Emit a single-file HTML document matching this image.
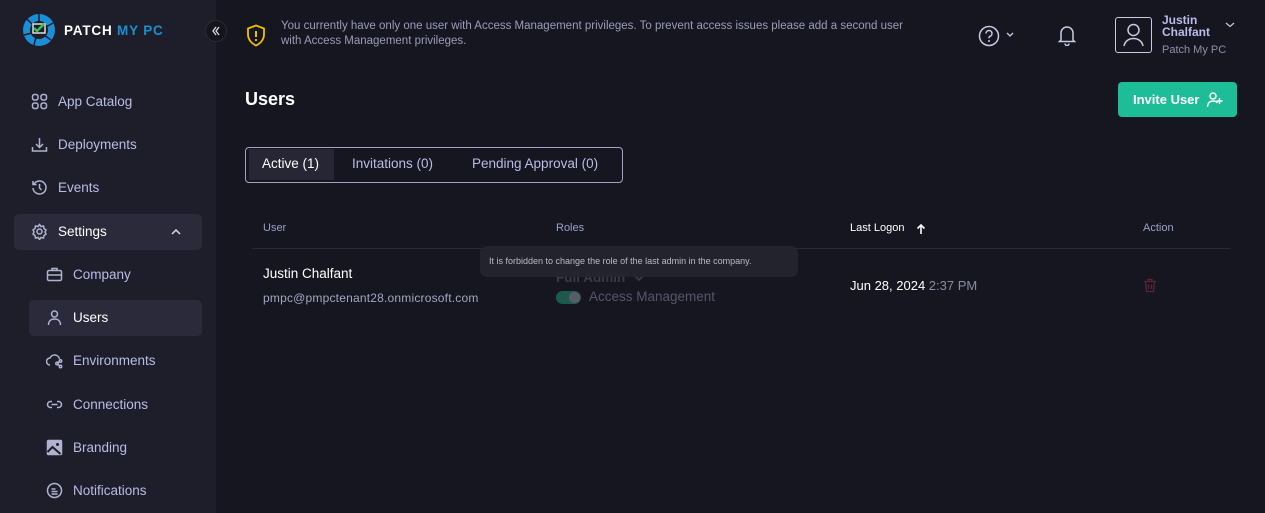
<!DOCTYPE html>
<html><head><meta charset="utf-8"><style>
*{box-sizing:border-box;margin:0;padding:0}
body{width:1265px;height:513px;overflow:hidden;background:#161620;font-family:"Liberation Sans",sans-serif;color:#c9cbe6;position:relative}
.side{position:absolute;left:0;top:0;width:216px;height:513px;background:#1e1e2b}
.abs{position:absolute}
.nav{position:absolute;display:flex;align-items:center;font-size:13.5px;color:#b9bde6}
.nav svg{width:17px;height:17px;margin-right:10px;stroke:#b0b3cf;fill:none;stroke-width:1.5}
.sel{background:#2a2a3a;border-radius:5px}
.th{position:absolute;top:222px;font-size:11px;color:#9aa0c8}
</style></head><body>
<div class="side">
  <svg class="abs" style="left:22px;top:13px" width="34" height="34" viewBox="0 0 34 34"><circle cx="17" cy="17" r="16" fill="#1a8fd6"/><path d="M17 1v8M31 10l-7 4M29 27l-7-5M12 32l2-8M2 22l8-2M5 6l6 6" stroke="#1e1e2b" stroke-width="1.5"/><circle cx="17" cy="17" r="9" fill="#1e1e2b"/><rect x="11" y="11" width="12" height="9" fill="none" stroke="#ddd" stroke-width="1.5"/><path d="M12 15l3 3 7-7" stroke="#3cc14a" stroke-width="2.4" fill="none"/></svg>
  <div class="abs" style="left:64px;top:23px;font-size:13.5px;font-weight:bold;color:#fff;letter-spacing:.8px">PATCH <span style="color:#1a8fd6">MY PC</span></div>
  <div class="nav" style="left:31px;top:93px"><svg viewBox="0 0 17 17"><rect x="1.5" y="1.5" width="5.5" height="5.5" rx="2"/><rect x="10" y="1.5" width="5.5" height="5.5" rx="2"/><rect x="1.5" y="10" width="5.5" height="5.5" rx="2"/><rect x="10" y="10" width="5.5" height="5.5" rx="2"/></svg>App Catalog</div>
  <div class="nav" style="left:31px;top:136px"><svg viewBox="0 0 17 17"><path d="M8.5 2v9M5 8l3.5 3.5L12 8M1.5 11v4h14v-4"/></svg>Deployments</div>
  <div class="nav" style="left:31px;top:179px"><svg viewBox="0 0 17 17"><path d="M3 5a6.5 6.5 0 1 1-1 4M2 2v3.5h3.5M8.5 5v4l2 2"/></svg>Events</div>
  <div class="sel abs" style="left:14px;top:214px;width:188px;height:36px"></div>
  <div class="nav" style="left:31px;top:223px;color:#fff"><svg viewBox="0 0 17 17"><circle cx="8.5" cy="8.5" r="2.5"/><path d="M8.5 1.5l1.5 2 2.5-.5.5 2.5 2 1.5-1 2 1 2-2 1.5-.5 2.5-2.5-.5-1.5 2-1.5-2-2.5.5-.5-2.5-2-1.5 1-2-1-2 2-1.5.5-2.5 2.5.5z"/></svg>Settings</div>
  <svg class="abs" style="left:170px;top:227px" width="12" height="10" viewBox="0 0 12 10"><path d="M2 7l4-4 4 4" stroke="#ddd" stroke-width="1.5" fill="none"/></svg>
  <div class="nav" style="left:46px;top:266px"><svg viewBox="0 0 17 17"><rect x="1.5" y="4.5" width="14" height="10" rx="1.5"/><path d="M6 4.5V2.5h5v2M1.5 9h14"/></svg>Company</div>
  <div class="sel abs" style="left:29px;top:300px;width:173px;height:36px"></div>
  <div class="nav" style="left:46px;top:309px;color:#fff"><svg viewBox="0 0 17 17"><circle cx="8.5" cy="5" r="3"/><path d="M2.5 16c0-4 2.5-6 6-6s6 2 6 6"/></svg>Users</div>
  <div class="nav" style="left:46px;top:352px"><svg viewBox="0 0 17 17"><path d="M4 13a3.5 3.5 0 0 1 0-7 5 5 0 0 1 9.5 1M11 11l3-2M11 12l3 2"/><circle cx="11" cy="11.5" r="1.2"/><circle cx="14.5" cy="9" r="1.2"/><circle cx="14.5" cy="14.5" r="1.2"/></svg>Environments</div>
  <div class="nav" style="left:46px;top:396px"><svg viewBox="0 0 17 17"><path d="M6 5.5H4.5a3 3 0 0 0 0 6H6M11 5.5h1.5a3 3 0 0 1 0 6H11M5.5 8.5h6"/></svg>Connections</div>
  <div class="nav" style="left:46px;top:439px"><svg viewBox="0 0 17 17"><rect x="1.5" y="1.5" width="14" height="14" rx="1" fill="#b0b3cf"/><path d="M1.5 13l5-5 8 7" stroke="#1e1e2b" stroke-width="2"/><circle cx="11.5" cy="5.5" r="1.5" fill="#1e1e2b" stroke="none"/></svg>Branding</div>
  <div class="nav" style="left:46px;top:482px"><svg viewBox="0 0 17 17"><circle cx="8.5" cy="8.5" r="7"/><path d="M5.5 7h4M5.5 9.5h6M5.5 12h6"/></svg>Notifications</div>
</div>
<div class="abs" style="left:205px;top:20px;width:22px;height:22px;border-radius:50%;background:#15151d;border:1px solid #2a2a38"></div>
<svg class="abs" style="left:209px;top:24px" width="14" height="14" viewBox="0 0 14 14"><path d="M7 3L4 7l3 4M10 3L7 7l3 4" stroke="#ddd" stroke-width="1.3" fill="none"/></svg>

<svg class="abs" style="left:246px;top:24px" width="20" height="23" viewBox="0 0 20 23"><path d="M10 1.5l8 3v6c0 5-3.5 9-8 11-4.5-2-8-6-8-11v-6z" stroke="#f0c000" stroke-width="1.8" fill="none"/><path d="M10 7v6" stroke="#f0c000" stroke-width="2"/><circle cx="10" cy="16" r="1.1" fill="#f0c000"/></svg>
<div class="abs" style="left:281px;top:19px;width:640px;font-size:11.5px;line-height:15px;color:#9a9cb8">You currently have only one user with Access Management privileges. To prevent access issues please add a second user with Access Management privileges.</div>

<svg class="abs" style="left:978px;top:25px" width="22" height="22" viewBox="0 0 22 22"><circle cx="11" cy="11" r="9.5" stroke="#c8cae0" stroke-width="1.5" fill="none"/><path d="M8 8.5a3 3 0 1 1 4 2.8c-.8.4-1 1-1 2" stroke="#c8cae0" stroke-width="1.5" fill="none"/><circle cx="11" cy="16" r="1" fill="#c8cae0"/></svg>
<svg class="abs" style="left:1005px;top:31px" width="10" height="8"><path d="M2 2l3 3 3-3" stroke="#c8cae0" stroke-width="1.3" fill="none"/></svg>
<svg class="abs" style="left:1057px;top:24px" width="20" height="22" viewBox="0 0 20 22"><path d="M4 16V9a6 6 0 0 1 12 0v7l1.5 1.5h-15zM8 19.5a2 2 0 0 0 4 0" stroke="#c8cae0" stroke-width="1.5" fill="none"/></svg>
<div class="abs" style="left:1115px;top:17px;width:37px;height:36px;border:1.5px solid #c8cae0;border-radius:3px"></div>
<svg class="abs" style="left:1119px;top:20px" width="29" height="30" viewBox="0 0 29 30"><circle cx="14.5" cy="10" r="5.5" stroke="#c8cae0" stroke-width="1.5" fill="none"/><path d="M5 26c1-5 5-7.5 9.5-7.5S23 21 24 26" stroke="#c8cae0" stroke-width="1.5" fill="none"/></svg>
<div class="abs" style="left:1162px;top:14px;font-size:12px;font-weight:bold;line-height:12px;color:#b8bce8">Justin<br>Chalfant</div>
<svg class="abs" style="left:1225px;top:21px" width="10" height="8"><path d="M1 2l4 3.5L9 2" stroke="#c8cae0" stroke-width="1.2" fill="none"/></svg>
<div class="abs" style="left:1162px;top:44px;font-size:11px;color:#8d8fa8">Patch My PC</div>

<div class="abs" style="left:245px;top:89px;font-size:18px;font-weight:bold;color:#fff">Users</div>
<div class="abs" style="left:1118px;top:82px;width:119px;height:35px;background:#1dbd97;border-radius:4px;color:#fff;font-size:13px;font-weight:bold;display:flex;align-items:center;padding-left:15px">Invite User
<svg style="margin-left:7px" width="17" height="17" viewBox="0 0 17 17"><circle cx="7" cy="5" r="3" stroke="#fff" stroke-width="1.5" fill="none"/><path d="M1.5 16c0-4 2.5-6 5.5-6s4 1 4.5 2M13.5 7v6M10.5 10h6" stroke="#fff" stroke-width="1.5" fill="none"/></svg></div>

<div class="abs" style="left:245px;top:147px;width:378px;height:36px;border:1px solid #a0a3c3;border-radius:4px"></div>
<div class="abs" style="left:249px;top:149px;width:85px;height:31px;background:#262634"></div>
<div class="abs" style="left:262px;top:156px;font-size:13.5px;color:#fff">Active (1)</div>
<div class="abs" style="left:352px;top:156px;font-size:13.5px;color:#b9bde6">Invitations (0)</div>
<div class="abs" style="left:472px;top:156px;font-size:13.5px;color:#b9bde6">Pending Approval (0)</div>

<div class="th" style="left:263px">User</div>
<div class="th" style="left:556px">Roles</div>
<div class="th" style="left:850px;color:#fff">Last Logon</div>
<svg class="abs" style="left:916px;top:223px" width="10" height="12"><path d="M5 11V2M1.5 5.5L5 2l3.5 3.5" stroke="#fff" stroke-width="1.6" fill="none"/></svg>
<div class="th" style="left:1143px">Action</div>
<div class="abs" style="left:252px;top:248px;width:978px;height:1px;background:#2a2a3a"></div>

<div class="abs" style="left:263px;top:266px;font-size:13.5px;color:#fff">Justin Chalfant</div>
<div class="abs" style="left:263px;top:291px;font-size:12px;color:#a3a6c2;letter-spacing:.2px">pmpc@pmpctenant28.onmicrosoft.com</div>
<div class="abs" style="left:556px;top:270px;font-size:13.5px;font-weight:bold;color:#3a3b48">Full Admin</div>
<svg class="abs" style="left:633px;top:274px" width="12" height="9"><path d="M1 1l5 5 5-5" stroke="#3a3b48" stroke-width="2" fill="none"/></svg>
<div class="abs" style="left:556px;top:291px;width:25px;height:13px;border-radius:7px;background:#1d5a4c"></div>
<div class="abs" style="left:569px;top:292px;width:11px;height:11px;border-radius:50%;background:#5b5c6a"></div>
<div class="abs" style="left:589px;top:289px;font-size:13.5px;color:#55566a">Access Management</div>
<div class="abs" style="left:480px;top:246px;width:318px;height:31px;border-radius:7px;background:rgba(37,37,47,.92);font-size:9px;color:#b8bace;padding:10px 0 0 9px">It is forbidden to change the role of the last admin in the company.</div>

<div class="abs" style="left:850px;top:278px;font-size:13px;color:#fff">Jun 28, 2024 <span style="color:#8a8ca0">2:37 PM</span></div>
<svg class="abs" style="left:1143px;top:278px" width="14" height="15" viewBox="0 0 14 15"><path d="M1 3.5h12M5 3.5V1.5h4v2M2.5 3.5l1 10h7l1-10M5.5 6.5v4.5M8.5 6.5v4.5" stroke="#5c2436" stroke-width="1.3" fill="none"/></svg>
</body></html>
